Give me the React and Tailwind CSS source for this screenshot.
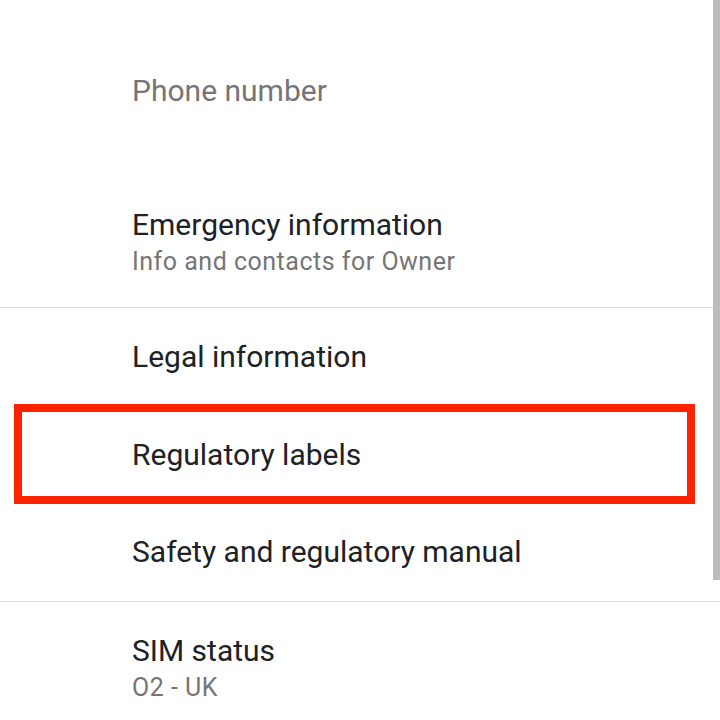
export default function App() {
  return (
    <div className="relative w-[720px] h-[720px] overflow-hidden bg-white" style={{ fontFamily: "Roboto, 'Noto Sans', sans-serif" }}>
      {/* Phone number */}
      <div className="h-[182px] flex items-center pl-[132px]">
        <span className="text-[30px] leading-[36px] text-[#757575]">Phone number</span>
      </div>
      {/* Emergency information */}
      <div className="h-[125px] pl-[132px] pt-[25px]">
        <div className="text-[30px] leading-[36px] text-[#202124]">Emergency information</div>
        <div className="mt-[3px] text-[25px] leading-[32px] text-[#757575] tracking-[0.5px]">Info and contacts for Owner</div>
      </div>
      <div className="h-px bg-[#dcdcdc]" />
      <div className="h-[98px] flex items-center pl-[132px]">
        <span className="text-[30px] leading-[36px] text-[#202124]">Legal information</span>
      </div>
      <div className="h-[97px] flex items-center pl-[132px]">
        <span className="text-[30px] leading-[36px] text-[#202124]">Regulatory labels</span>
      </div>
      <div className="h-[98px] flex items-center pl-[132px]">
        <span className="text-[30px] leading-[36px] text-[#202124]">Safety and regulatory manual</span>
      </div>
      <div className="h-px bg-[#dcdcdc]" />
      <div className="pl-[132px] pt-[31px]">
        <div className="text-[30px] leading-[36px] text-[#202124]">SIM status</div>
        <div className="mt-[3px] text-[25px] leading-[32px] text-[#757575] tracking-[0.5px]">O2 - UK</div>
      </div>

      {/* highlight frame */}
      <div className="absolute left-[14px] top-[404px] w-[681px] h-[100px] border-[8px] border-[#ff2200]" />
      {/* scrollbar */}
      <div className="absolute right-0 top-0 w-[7px] h-[580px] bg-[#bdbdbd]" />
    </div>
  );
}
